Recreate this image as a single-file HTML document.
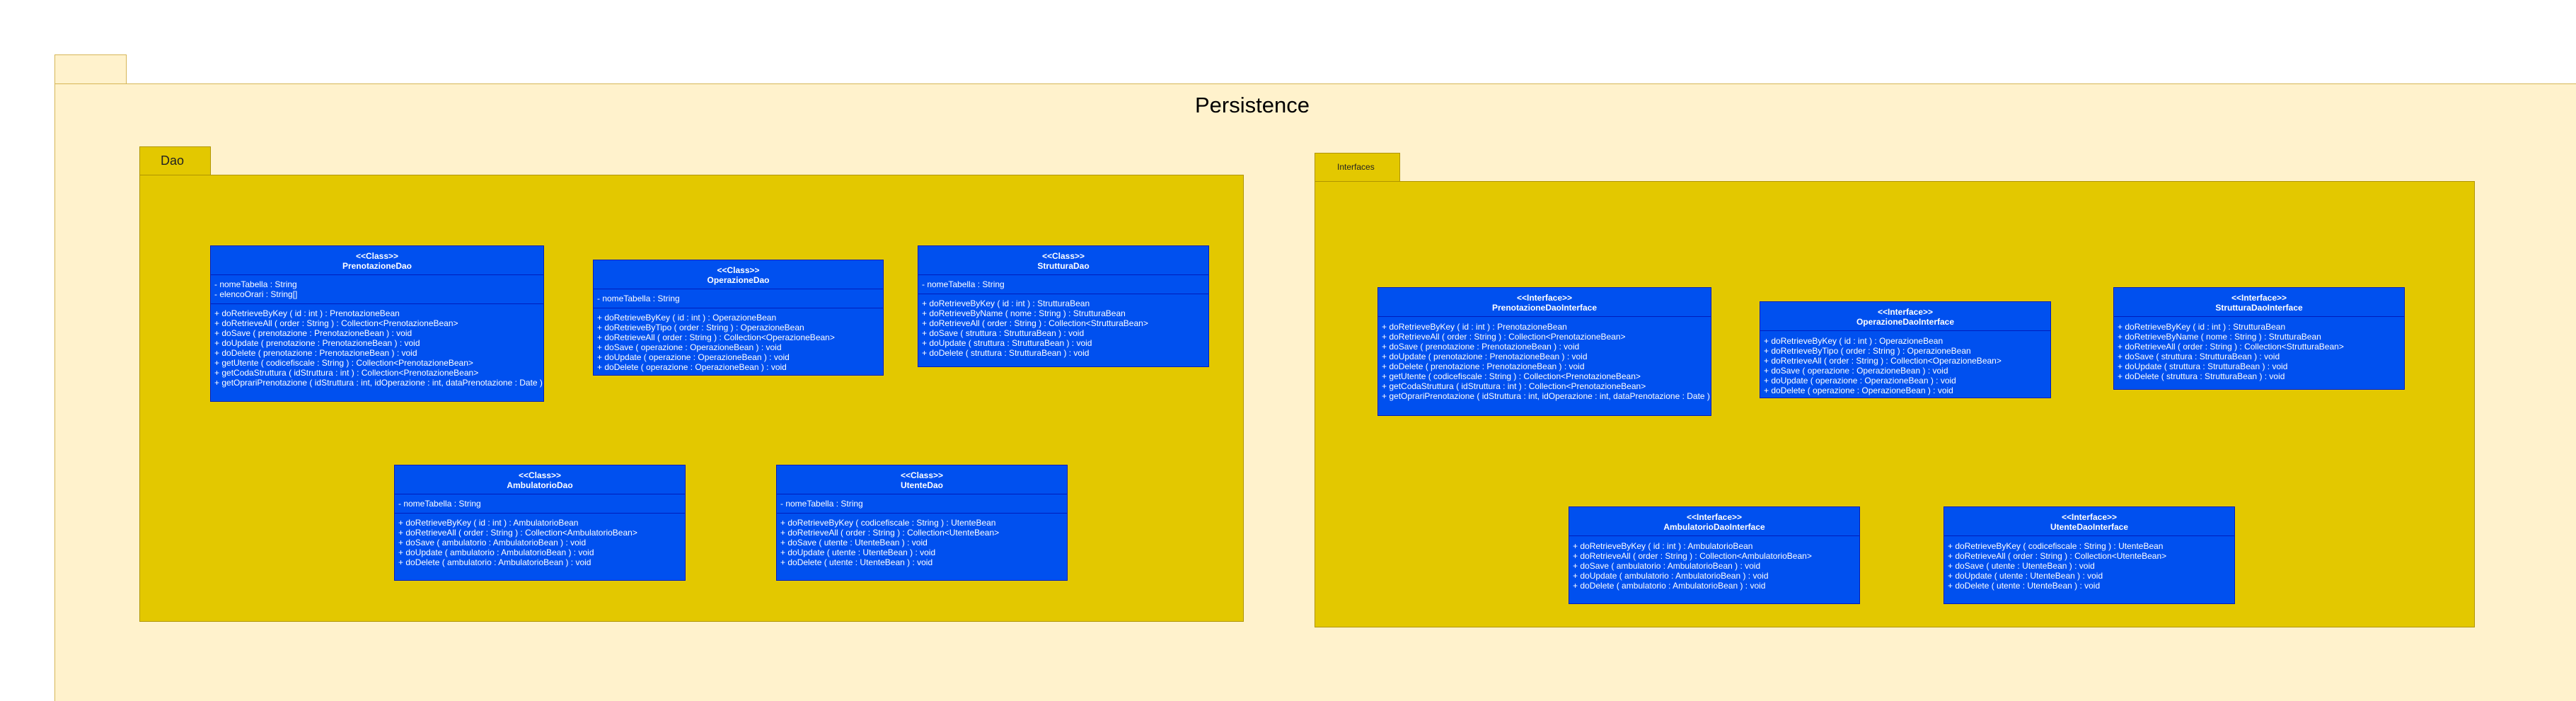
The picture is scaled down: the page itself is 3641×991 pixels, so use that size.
<!DOCTYPE html>
<html><head><meta charset="utf-8"><style>
*{margin:0;padding:0;box-sizing:border-box}
html{width:3641px;height:991px;overflow:hidden}
body{width:3641px;height:991px;background:#fff;position:relative;overflow:hidden;font-family:"Liberation Sans",Arial,sans-serif}
.a{position:absolute}
.outer{background:#fff2cc;border:1px solid #d6b656}
.yel{background:#e3c800;border:1px solid #b09500}
.box{position:absolute;background:#0050ef;border:1px solid #001dbc;color:#fff;font-size:12px;line-height:14px}
.hd{height:41px;border-bottom:1px solid #001dbc;text-align:center;font-weight:bold;padding-top:7px}
.sec{padding:6px 0 6px 5px;white-space:nowrap;overflow:hidden}
.sec+.sec{border-top:1px solid #001dbc}
</style></head><body>
<div class="a outer" style="left:77px;top:77px;width:102px;height:42px"></div>
<div class="a outer" style="left:77px;top:118px;width:3564px;height:880px;border-right:none"></div>
<div class="a" style="left:1689px;top:129px;font-size:31px;line-height:40px;color:#000">Persistence</div>

<div class="a yel" style="left:197px;top:207px;width:101px;height:41px"></div>
<div class="a yel" style="left:197px;top:247px;width:1561px;height:632px"></div>
<div class="a" style="left:227px;top:216px;font-size:18px;line-height:22px;color:#222">Dao</div>

<div class="a yel" style="left:1858px;top:216px;width:121px;height:41px"></div>
<div class="a yel" style="left:1858px;top:256px;width:1640px;height:631px"></div>
<div class="a" style="left:1890px;top:229px;font-size:12px;line-height:14px;color:#222">Interfaces</div>

<div class="box" style="left:297px;top:347px;width:472px;height:221px"><div class="hd">&lt;&lt;Class&gt;&gt;<br>PrenotazioneDao</div>
<div class="sec">- nomeTabella : String<br>- elencoOrari : String[]</div>
<div class="sec">+ doRetrieveByKey ( id : int ) : PrenotazioneBean<br>+ doRetrieveAll ( order : String ) : Collection&lt;PrenotazioneBean&gt;<br>+ doSave ( prenotazione : PrenotazioneBean ) : void<br>+ doUpdate ( prenotazione : PrenotazioneBean ) : void<br>+ doDelete ( prenotazione : PrenotazioneBean ) : void<br>+ getUtente ( codicefiscale : String ) : Collection&lt;PrenotazioneBean&gt;<br>+ getCodaStruttura ( idStruttura : int ) : Collection&lt;PrenotazioneBean&gt;<br>+ getOprariPrenotazione ( idStruttura : int, idOperazione : int, dataPrenotazione : Date )</div></div>

<div class="box" style="left:838px;top:367px;width:411px;height:164px"><div class="hd">&lt;&lt;Class&gt;&gt;<br>OperazioneDao</div>
<div class="sec">- nomeTabella : String</div>
<div class="sec">+ doRetrieveByKey ( id : int ) : OperazioneBean<br>+ doRetrieveByTipo ( order : String ) : OperazioneBean<br>+ doRetrieveAll ( order : String ) : Collection&lt;OperazioneBean&gt;<br>+ doSave ( operazione : OperazioneBean ) : void<br>+ doUpdate ( operazione : OperazioneBean ) : void<br>+ doDelete ( operazione : OperazioneBean ) : void</div></div>

<div class="box" style="left:1297px;top:347px;width:412px;height:172px"><div class="hd">&lt;&lt;Class&gt;&gt;<br>StrutturaDao</div>
<div class="sec">- nomeTabella : String</div>
<div class="sec">+ doRetrieveByKey ( id : int ) : StrutturaBean<br>+ doRetrieveByName ( nome : String ) : StrutturaBean<br>+ doRetrieveAll ( order : String ) : Collection&lt;StrutturaBean&gt;<br>+ doSave ( struttura : StrutturaBean ) : void<br>+ doUpdate ( struttura : StrutturaBean ) : void<br>+ doDelete ( struttura : StrutturaBean ) : void</div></div>

<div class="box" style="left:557px;top:657px;width:412px;height:164px"><div class="hd">&lt;&lt;Class&gt;&gt;<br>AmbulatorioDao</div>
<div class="sec">- nomeTabella : String</div>
<div class="sec">+ doRetrieveByKey ( id : int ) : AmbulatorioBean<br>+ doRetrieveAll ( order : String ) : Collection&lt;AmbulatorioBean&gt;<br>+ doSave ( ambulatorio : AmbulatorioBean ) : void<br>+ doUpdate ( ambulatorio : AmbulatorioBean ) : void<br>+ doDelete ( ambulatorio : AmbulatorioBean ) : void</div></div>

<div class="box" style="left:1097px;top:657px;width:412px;height:164px"><div class="hd">&lt;&lt;Class&gt;&gt;<br>UtenteDao</div>
<div class="sec">- nomeTabella : String</div>
<div class="sec">+ doRetrieveByKey ( codicefiscale : String ) : UtenteBean<br>+ doRetrieveAll ( order : String ) : Collection&lt;UtenteBean&gt;<br>+ doSave ( utente : UtenteBean ) : void<br>+ doUpdate ( utente : UtenteBean ) : void<br>+ doDelete ( utente : UtenteBean ) : void</div></div>

<div class="box" style="left:1947px;top:406px;width:472px;height:182px"><div class="hd">&lt;&lt;Interface&gt;&gt;<br>PrenotazioneDaoInterface</div>
<div class="sec" style="padding-top:7px">+ doRetrieveByKey ( id : int ) : PrenotazioneBean<br>+ doRetrieveAll ( order : String ) : Collection&lt;PrenotazioneBean&gt;<br>+ doSave ( prenotazione : PrenotazioneBean ) : void<br>+ doUpdate ( prenotazione : PrenotazioneBean ) : void<br>+ doDelete ( prenotazione : PrenotazioneBean ) : void<br>+ getUtente ( codicefiscale : String ) : Collection&lt;PrenotazioneBean&gt;<br>+ getCodaStruttura ( idStruttura : int ) : Collection&lt;PrenotazioneBean&gt;<br>+ getOprariPrenotazione ( idStruttura : int, idOperazione : int, dataPrenotazione : Date )</div></div>

<div class="box" style="left:2487px;top:426px;width:412px;height:137px"><div class="hd">&lt;&lt;Interface&gt;&gt;<br>OperazioneDaoInterface</div>
<div class="sec" style="padding-top:7px">+ doRetrieveByKey ( id : int ) : OperazioneBean<br>+ doRetrieveByTipo ( order : String ) : OperazioneBean<br>+ doRetrieveAll ( order : String ) : Collection&lt;OperazioneBean&gt;<br>+ doSave ( operazione : OperazioneBean ) : void<br>+ doUpdate ( operazione : OperazioneBean ) : void<br>+ doDelete ( operazione : OperazioneBean ) : void</div></div>

<div class="box" style="left:2987px;top:406px;width:412px;height:145px"><div class="hd">&lt;&lt;Interface&gt;&gt;<br>StrutturaDaoInterface</div>
<div class="sec" style="padding-top:7px">+ doRetrieveByKey ( id : int ) : StrutturaBean<br>+ doRetrieveByName ( nome : String ) : StrutturaBean<br>+ doRetrieveAll ( order : String ) : Collection&lt;StrutturaBean&gt;<br>+ doSave ( struttura : StrutturaBean ) : void<br>+ doUpdate ( struttura : StrutturaBean ) : void<br>+ doDelete ( struttura : StrutturaBean ) : void</div></div>

<div class="box" style="left:2217px;top:716px;width:412px;height:138px"><div class="hd">&lt;&lt;Interface&gt;&gt;<br>AmbulatorioDaoInterface</div>
<div class="sec" style="padding-top:7px">+ doRetrieveByKey ( id : int ) : AmbulatorioBean<br>+ doRetrieveAll ( order : String ) : Collection&lt;AmbulatorioBean&gt;<br>+ doSave ( ambulatorio : AmbulatorioBean ) : void<br>+ doUpdate ( ambulatorio : AmbulatorioBean ) : void<br>+ doDelete ( ambulatorio : AmbulatorioBean ) : void</div></div>

<div class="box" style="left:2747px;top:716px;width:412px;height:138px"><div class="hd">&lt;&lt;Interface&gt;&gt;<br>UtenteDaoInterface</div>
<div class="sec" style="padding-top:7px">+ doRetrieveByKey ( codicefiscale : String ) : UtenteBean<br>+ doRetrieveAll ( order : String ) : Collection&lt;UtenteBean&gt;<br>+ doSave ( utente : UtenteBean ) : void<br>+ doUpdate ( utente : UtenteBean ) : void<br>+ doDelete ( utente : UtenteBean ) : void</div></div>
</body></html>
